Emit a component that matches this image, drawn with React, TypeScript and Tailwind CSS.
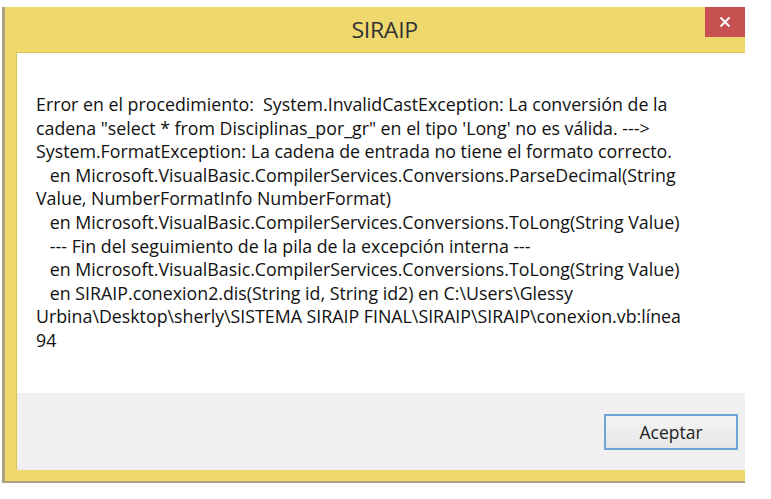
const lines = [
  'Error en el procedimiento:  System.InvalidCastException: La conversión de la',
  'cadena "select * from Disciplinas_por_gr" en el tipo \'Long\' no es válida. --->',
  'System.FormatException: La cadena de entrada no tiene el formato correcto.',
  '   en Microsoft.VisualBasic.CompilerServices.Conversions.ParseDecimal(String',
  'Value, NumberFormatInfo NumberFormat)',
  '   en Microsoft.VisualBasic.CompilerServices.Conversions.ToLong(String Value)',
  '   --- Fin del seguimiento de la pila de la excepción interna ---',
  '   en Microsoft.VisualBasic.CompilerServices.Conversions.ToLong(String Value)',
  '   en SIRAIP.conexion2.dis(String id, String id2) en C:\\Users\\Glessy',
  'Urbina\\Desktop\\sherly\\SISTEMA SIRAIP FINAL\\SIRAIP\\SIRAIP\\conexion.vb:línea',
  '94',
];

export default function App() {
  return (
    <div className="w-[771px] h-[499px] bg-white pt-[7px] pl-[2px] font-['Segoe_UI','Open_Sans',sans-serif] overflow-hidden">
      <div className="w-[743px] border-l-[3px] border-b-[2px] border-[#a8a282]">
        <div className="bg-[#efd86d] pl-[11px] pb-[11px]">
          {/* title bar */}
          <div className="relative h-[45px] -ml-[11px] flex items-center justify-center pl-[20px]">
            <span className="text-[22px] text-[#333] tracking-[-0.3px] scale-x-[1.05]">SIRAIP</span>
            <div className="absolute top-0 right-0 w-[40px] h-[30px] bg-[#c75050] flex items-center justify-center">
              <svg width="12" height="12" viewBox="0 0 12 12">
                <path d="M1.5 1.5 L10.5 10.5 M10.5 1.5 L1.5 10.5" stroke="#fff" strokeWidth="2" />
              </svg>
            </div>
          </div>
          <div className="border-l border-t border-[#d9c25a]">
            {/* message */}
            <div className="bg-white h-[340px] pl-[19px] pt-[40px]">
              <div className="text-[17.8px] leading-[23.6px] text-[#111] whitespace-pre">
                {lines.map((l, i) => (
                  <div key={i}>{l}</div>
                ))}
              </div>
            </div>
            {/* button strip */}
            <div className="bg-[#f0f0f0] h-[77px] flex justify-end items-start pt-[21px] pr-[7px]">
              <button className="w-[134px] h-[36px] border-2 border-[#6fa5da] bg-gradient-to-b from-[#f4f4f4] to-[#e6e6e6] text-[17.5px] text-[#222] flex items-center justify-center">
                Aceptar
              </button>
            </div>
          </div>
        </div>
      </div>
    </div>
  );
}
